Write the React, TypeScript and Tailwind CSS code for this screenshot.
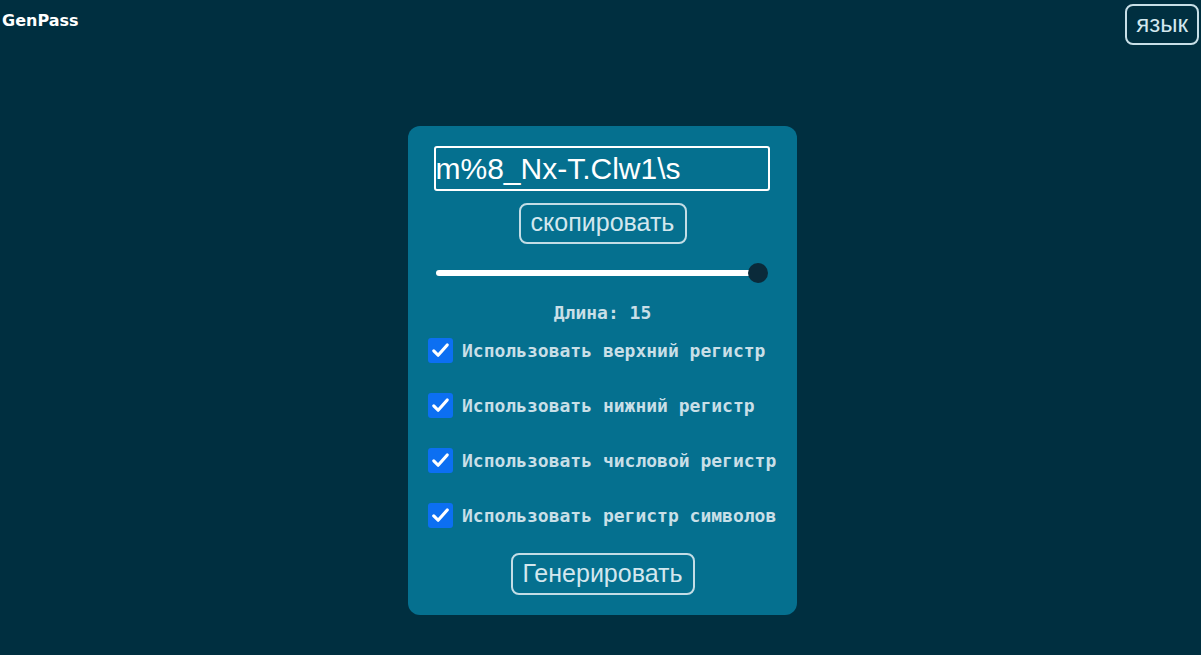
import React from 'react'

const options = [
  'Использовать верхний регистр',
  'Использовать нижний регистр',
  'Использовать числовой регистр',
  'Использовать регистр символов',
]

const Check = () => (
  <div className="w-[25px] h-[25px] rounded-[3px] bg-[#0c6ff2] flex items-center justify-center shrink-0">
    <svg width="19" height="19" viewBox="0 0 24 24" fill="none">
      <path d="M3.5 12.5l5.5 5.5L20.5 5" stroke="white" strokeWidth="4" strokeLinecap="round" strokeLinejoin="round" />
    </svg>
  </div>
)

const App = () => {
  return (
    <div className="w-full min-h-[655px] bg-[#002f40] flex flex-col">
      {/* header */}
      <div className="flex justify-between items-start">
        <div className="pl-[2px] pt-[11px] text-white font-bold text-[16px] font-['DejaVu_Sans',sans-serif] leading-[20px]">
          GenPass
        </div>
        <button className="mt-[4px] mr-[2px] h-[41px] px-[9px] border-2 border-[#c8dfe7] rounded-[8px] text-[#d3e7ee] text-[24px] font-['Liberation_Sans',Arial,sans-serif] leading-none pb-[2px]">
          язык
        </button>
      </div>

      {/* card */}
      <div className="mt-[81px] mx-auto w-[389px] h-[489px] rounded-[12px] bg-[#05708f] px-[26px] pt-[20px] flex flex-col items-center translate-x-[2px]">
        <div className="w-[336px] h-[45px] border-2 border-white rounded-[3px] flex items-center -ml-[2px] text-white text-[30px] font-['Liberation_Sans',Arial,sans-serif] leading-none">
          m%8_Nx-T.Clw1\s
        </div>

        <button className="mt-[12px] w-[168px] h-[41px] border-2 border-[#c3dde6] rounded-[8px] text-[#d3e7ee] text-[25px] font-['Liberation_Sans',Arial,sans-serif] leading-none pb-[2px]">
          скопировать
        </button>

        {/* slider */}
        <div className="relative mt-[19px] w-[332px] h-[20px] self-start ml-[2px]">
          <div className="absolute left-0 right-[10px] top-[7px] h-[6px] rounded-full bg-white" />
          <div className="absolute right-0 top-0 w-[20px] h-[20px] rounded-full bg-[#0a2a3a]" />
        </div>

        <div className="mt-[19px] text-[#c9dfe7] font-bold text-[18px] leading-[22px] font-['DejaVu_Sans_Mono',monospace]">
          Длина: 15
        </div>

        <div className="mt-[14px] self-start -ml-[6px] flex flex-col gap-[30px]">
          {options.map((o) => (
            <div key={o} className="flex items-center gap-[9px] h-[25px]">
              <Check />
              <span className="text-[#c9dfe7] font-bold text-[18px] leading-none font-['DejaVu_Sans_Mono',monospace] whitespace-nowrap">
                {o}
              </span>
            </div>
          ))}
        </div>

        <button className="mt-[25px] w-[184px] h-[42px] border-2 border-[#c3dde6] rounded-[8px] text-[#d3e7ee] text-[25px] font-['Liberation_Sans',Arial,sans-serif] leading-none pb-[1px]">
          Генерировать
        </button>
      </div>
    </div>
  )
}

export default App
